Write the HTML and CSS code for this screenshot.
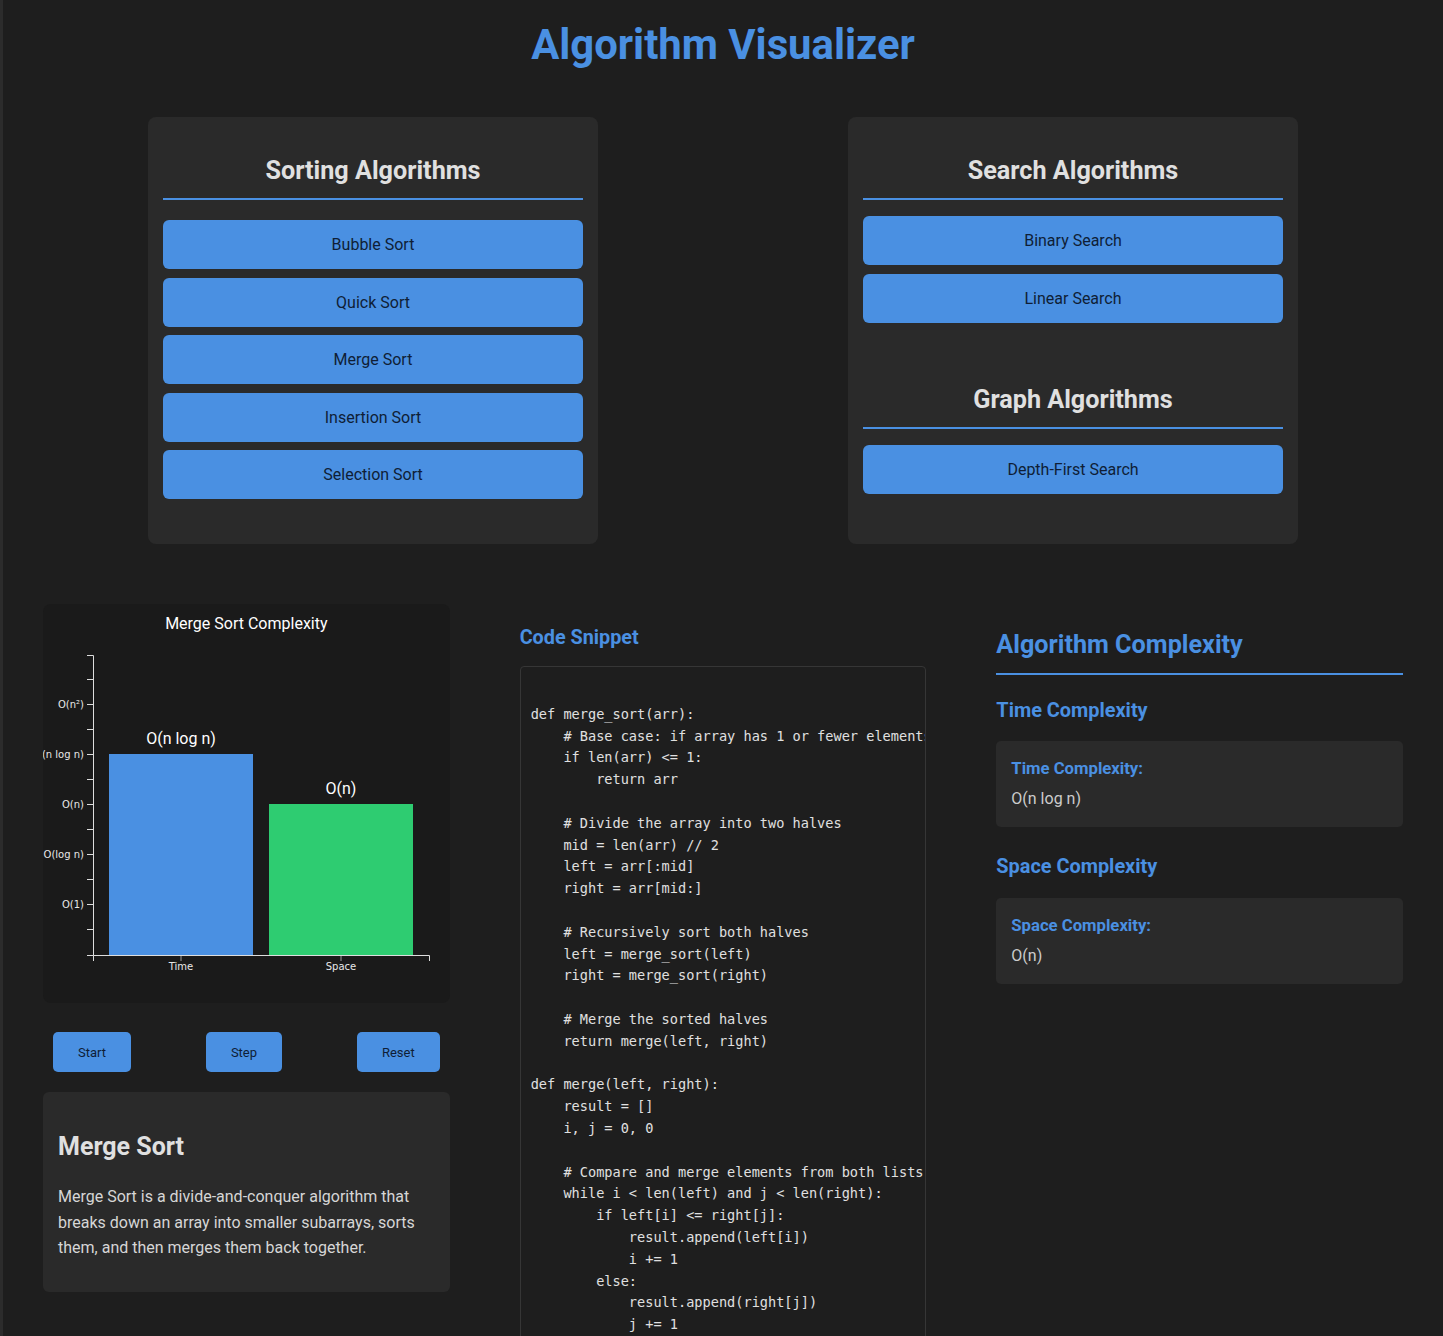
FILE: index.html
```
<!DOCTYPE html>
<html lang="en">
<head>
<meta charset="utf-8">
<title>Algorithm Visualizer</title>
<link rel="stylesheet" href="styles.css">
</head>
<body>
<div class="page">
  <h1 class="title">Algorithm Visualizer</h1>

  <div class="menus">
    <div class="menu-card">
      <h2 class="menu-title">Sorting Algorithms</h2>
      <div class="btn-list sorting">
        <button class="algo-btn">Bubble Sort</button>
        <button class="algo-btn">Quick Sort</button>
        <button class="algo-btn">Merge Sort</button>
        <button class="algo-btn">Insertion Sort</button>
        <button class="algo-btn">Selection Sort</button>
      </div>
    </div>
    <div class="menu-card">
      <h2 class="menu-title">Search Algorithms</h2>
      <div class="btn-list">
        <button class="algo-btn">Binary Search</button>
        <button class="algo-btn">Linear Search</button>
      </div>
      <h2 class="menu-title graph">Graph Algorithms</h2>
      <div class="btn-list">
        <button class="algo-btn">Depth-First Search</button>
      </div>
    </div>
  </div>

  <div class="workspace">
    <div class="col">
      <div class="chart-card">
        <div class="chart-title">Merge Sort Complexity</div>
        <svg class="chart" width="406" height="350" viewBox="0 0 406 350">
          <g class="y-axis" font-size="10" text-anchor="end">
            <path d="M44,15.5H50.5V315.5H44" fill="none" stroke="#ddd"/>
            <line x1="44" y1="39.5" x2="50" y2="39.5" stroke="#ddd"/>
            <line x1="44" y1="64.5" x2="50" y2="64.5" stroke="#ddd"/>
            <line x1="44" y1="89.5" x2="50" y2="89.5" stroke="#ddd"/>
            <line x1="44" y1="114.5" x2="50" y2="114.5" stroke="#ddd"/>
            <line x1="44" y1="139.5" x2="50" y2="139.5" stroke="#ddd"/>
            <line x1="44" y1="164.5" x2="50" y2="164.5" stroke="#ddd"/>
            <line x1="44" y1="189.5" x2="50" y2="189.5" stroke="#ddd"/>
            <line x1="44" y1="214.5" x2="50" y2="214.5" stroke="#ddd"/>
            <line x1="44" y1="239.5" x2="50" y2="239.5" stroke="#ddd"/>
            <line x1="44" y1="264.5" x2="50" y2="264.5" stroke="#ddd"/>
            <line x1="44" y1="289.5" x2="50" y2="289.5" stroke="#ddd"/>
            <text x="41" y="68">O(n²)</text>
            <text x="41" y="118">O(n log n)</text>
            <text x="41" y="168">O(n)</text>
            <text x="41" y="218">O(log n)</text>
            <text x="41" y="268">O(1)</text>
          </g>
          <rect x="66" y="114" width="144" height="201" fill="#4a90e2"/>
          <rect x="226" y="164" width="144" height="151" fill="#2ecc71"/>
          <g class="x-axis" font-size="10" text-anchor="middle">
            <path d="M50.5,321V315.5H386.5V321" fill="none" stroke="#ddd"/>
            <line x1="138" y1="316" x2="138" y2="321" stroke="#999"/>
            <line x1="298" y1="316" x2="298" y2="321" stroke="#999"/>
            <text x="138" y="330">Time</text>
            <text x="298" y="330">Space</text>
          </g>
          <text class="bar-label" x="138" y="104" text-anchor="middle">O(n log n)</text>
          <text class="bar-label" x="298" y="154" text-anchor="middle">O(n)</text>
        </svg>
      </div>

      <div class="controls">
        <button class="ctrl-btn">Start</button>
        <button class="ctrl-btn">Step</button>
        <button class="ctrl-btn">Reset</button>
      </div>

      <div class="info-card">
        <h2 class="info-title">Merge Sort</h2>
        <p class="info-text">Merge Sort is a divide-and-conquer algorithm that breaks down an array into smaller subarrays, sorts them, and then merges them back together.</p>
      </div>
    </div>

    <div class="col">
      <h3 class="code-title">Code Snippet</h3>
      <pre class="code">

def merge_sort(arr):
    # Base case: if array has 1 or fewer elements
    if len(arr) &lt;= 1:
        return arr

    # Divide the array into two halves
    mid = len(arr) // 2
    left = arr[:mid]
    right = arr[mid:]

    # Recursively sort both halves
    left = merge_sort(left)
    right = merge_sort(right)

    # Merge the sorted halves
    return merge(left, right)

def merge(left, right):
    result = []
    i, j = 0, 0

    # Compare and merge elements from both lists
    while i &lt; len(left) and j &lt; len(right):
        if left[i] &lt;= right[j]:
            result.append(left[i])
            i += 1
        else:
            result.append(right[j])
            j += 1

    # Add remaining elements
    result.extend(left[i:])
    result.extend(right[j:])
    return result
</pre>
    </div>

    <div class="col">
      <h2 class="cx-title">Algorithm Complexity</h2>
      <h3 class="cx-sub">Time Complexity</h3>
      <div class="cx-card">
        <div class="cx-label">Time Complexity:</div>
        <div class="cx-value">O(n log n)</div>
      </div>
      <h3 class="cx-sub">Space Complexity</h3>
      <div class="cx-card">
        <div class="cx-label">Space Complexity:</div>
        <div class="cx-value">O(n)</div>
      </div>
    </div>
  </div>
</div>
</body>
</html>
```
FILE: styles.css
```
html, body {
  margin: 0;
  padding: 0;
}
body {
  background: #1e1e1e;
  border-left: 3px solid #2c2c2c;
  color: #e0e0e0;
  font-family: Roboto, "Liberation Sans", sans-serif;
  min-height: 1336px;
  box-sizing: border-box;
}
.page {
  max-width: 1400px;
  margin: 0 auto;
  padding: 0 20px;
  box-sizing: border-box;
}
.title {
  margin: 0;
  padding-top: 22px;
  text-align: center;
  color: #4a90e2;
  font-size: 41.8px;
  line-height: 46px;
  font-weight: 700;
}
.menus {
  display: flex;
  justify-content: space-around;
  margin: 49px -20px 0;
}
.menu-card {
  width: 450px;
  box-sizing: border-box;
  background: #2a2a2a;
  border-radius: 8px;
  padding: 20px 15px 45px;
}
.menu-title {
  margin: 19px 0 0;
  padding-bottom: 12px;
  border-bottom: 2px solid #4a90e2;
  text-align: center;
  font-size: 25.2px;
  line-height: 30px;
  font-weight: 700;
  color: #e0e0e0;
}
.menu-title.graph {
  margin-top: 62px;
}
.btn-list {
  display: flex;
  flex-direction: column;
  gap: 8.5px;
  margin-top: 16px;
}
.btn-list.sorting {
  margin-top: 20px;
}
.algo-btn {
  display: block;
  width: 100%;
  height: 49px;
  border: none;
  border-radius: 6px;
  background: #4a90e2;
  color: #0f1e36;
  font-family: Roboto, "Liberation Sans", sans-serif;
  font-size: 16px;
  padding: 0;
}
.workspace {
  display: grid;
  grid-template-columns: repeat(3, 1fr);
  column-gap: 70px;
  margin-top: 60px;
  align-items: start;
}
.col {
  min-width: 0;
}
.chart-card {
  background: #1a1a1a;
  border-radius: 8px;
  padding: 10px 0 13px;
  overflow: hidden;
}
.chart-title {
  text-align: center;
  font-size: 16px;
  line-height: 19px;
  color: #ffffff;
}
.chart {
  display: block;
  margin-top: 7px;
}
.chart text {
  fill: #e8e8e8;
  font-family: "DejaVu Sans", sans-serif;
}
.chart .bar-label {
  font-family: Roboto, "Liberation Sans", sans-serif;
  font-size: 16px;
  fill: #ffffff;
}
.controls {
  display: flex;
  justify-content: space-between;
  padding: 0 10px;
  margin-top: 29px;
}
.ctrl-btn {
  height: 40px;
  padding: 0 25px;
  border: none;
  border-radius: 5px;
  background: #4a90e2;
  color: #0f1e36;
  font-family: Roboto, "Liberation Sans", sans-serif;
  font-size: 13px;
}
.info-card {
  margin-top: 20px;
  background: #2a2a2a;
  border-radius: 6px;
  padding: 20px 15px;
}
.info-title {
  margin: 20px 0 22px;
  font-size: 25px;
  line-height: 30px;
  font-weight: 700;
  color: #e0e0e0;
}
.info-text {
  margin: 0 0 11px;
  font-size: 16px;
  line-height: 25.6px;
  color: #d6d6d6;
}
.code-title {
  margin: 22px 0 16px;
  font-size: 19.8px;
  line-height: 24px;
  font-weight: 700;
  color: #4a90e2;
}
.code {
  margin: 0;
  border: 1px solid #363636;
  border-radius: 4px;
  background: #1e1e1e;
  padding: 15px 10px;
  overflow: hidden;
  font-family: "DejaVu Sans Mono", "Liberation Mono", monospace;
  font-size: 13.6px;
  line-height: 21.8px;
  color: #e0e0e0;
}
.cx-title {
  margin: 26px 0 0;
  padding-bottom: 13px;
  border-bottom: 2px solid #4a90e2;
  font-size: 25.2px;
  line-height: 30px;
  font-weight: 700;
  color: #4a90e2;
}
.cx-sub {
  margin: 24px 0 18px;
  font-size: 19.9px;
  line-height: 24px;
  font-weight: 700;
  color: #4a90e2;
}
.cx-card + .cx-sub {
  margin-top: 28px;
  margin-bottom: 19px;
}
.cx-card {
  background: #2a2a2a;
  border-radius: 5px;
  padding: 18px 15px;
}
.cx-label {
  font-size: 16.7px;
  line-height: 20px;
  font-weight: 700;
  color: #4a90e2;
}
.cx-value {
  margin-top: 10px;
  font-size: 16px;
  line-height: 20px;
  color: #cccccc;
}
```
